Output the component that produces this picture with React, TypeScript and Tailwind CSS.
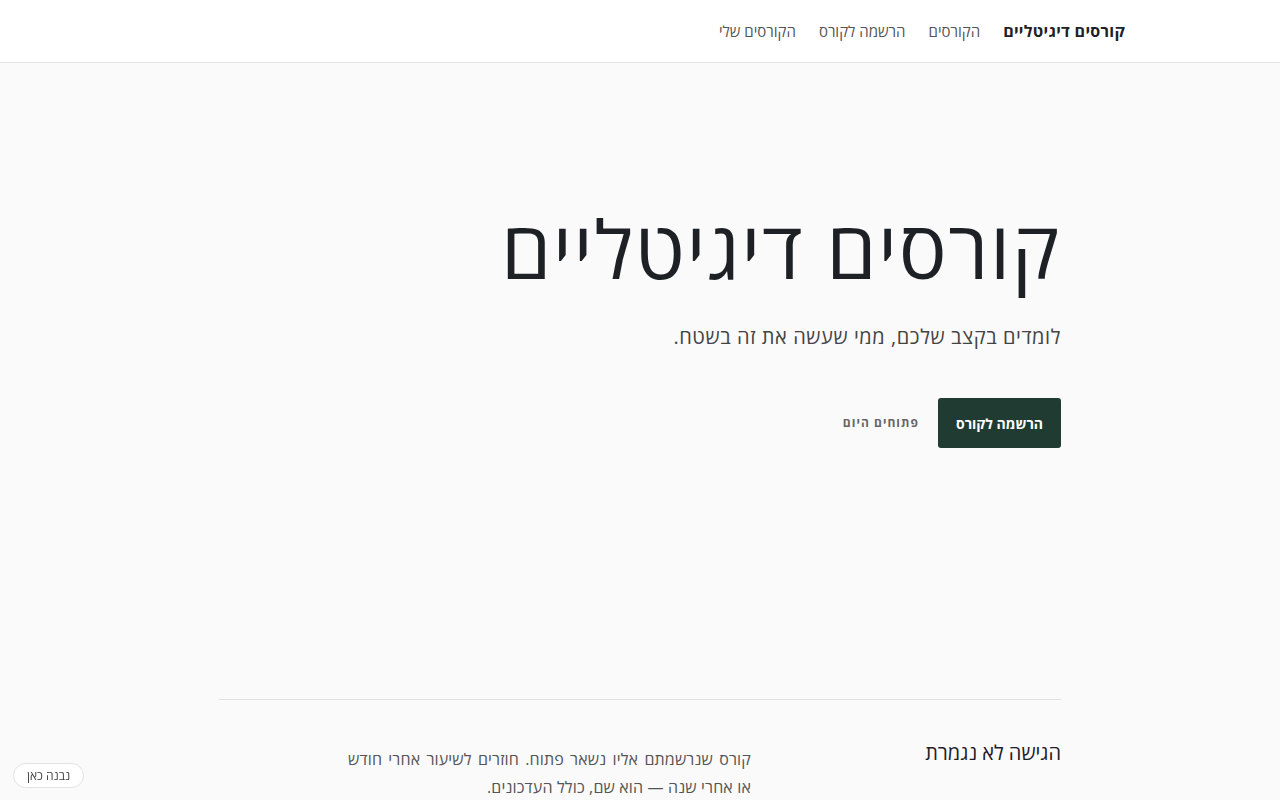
import React from "react";

const navLinks = ["הקורסים", "הרשמה לקורס", "הקורסים שלי"];

export default function App() {
  return (
    <div
      dir="rtl"
      className="min-h-screen bg-[#fafafa] text-[#1d2125]"
      style={{ fontFamily: '"Open Sans", "Noto Sans", sans-serif' }}
    >
      <header className="bg-white border-b border-[#e5e5e5]">
        <nav className="mx-auto w-[970px] h-[62px] flex items-center gap-[23px]">
          <a href="#" className="text-[16px] font-bold tracking-[0.3px] text-[#1d2125]">
            קורסים דיגיטליים
          </a>
          {navLinks.map((l) => (
            <a key={l} href="#" className="text-[15px] text-[#555]">
              {l}
            </a>
          ))}
        </nav>
      </header>

      <main className="mx-auto w-[842px]">
        <section className="pt-[145px] h-[637px] border-b border-[#e2e2e2]">
          <h1 className="text-[80px] leading-none font-normal tracking-[1.6px]">
            קורסים דיגיטליים
          </h1>
          <p className="mt-[34px] text-[20px] tracking-[0.58px] text-[#444]">
            לומדים בקצב שלכם, ממי שעשה את זה בשטח.
          </p>
          <div className="mt-[46px] flex items-center gap-[19px]">
            <a
              href="#"
              className="h-[50px] px-[18px] flex items-center rounded-[3px] bg-[#1f3b32] text-white text-[14px] font-bold"
            >
              הרשמה לקורס
            </a>
            <span className="text-[12px] font-bold tracking-[1.05px] text-[#666]">
              פתוחים היום
            </span>
          </div>
        </section>

        <section className="pt-[38px] flex gap-[30px]">
          <h2 className="w-[280px] text-[20px] font-normal">הגישה לא נגמרת</h2>
          <p className="mt-[7px] w-[403px] text-[16px] leading-[28px] tracking-[0.15px] text-justify text-[#555]">
            קורס שנרשמתם אליו נשאר פתוח. חוזרים לשיעור אחרי חודש או אחרי שנה — הוא שם, כולל העדכונים.
          </p>
        </section>
      </main>

      <div className="fixed bottom-[12px] left-[13px] px-[13px] h-[25px] flex items-center rounded-full border border-[#e2e2e2] bg-white text-[12px] text-[#444]">
        נבנה כאן
      </div>
    </div>
  );
}
